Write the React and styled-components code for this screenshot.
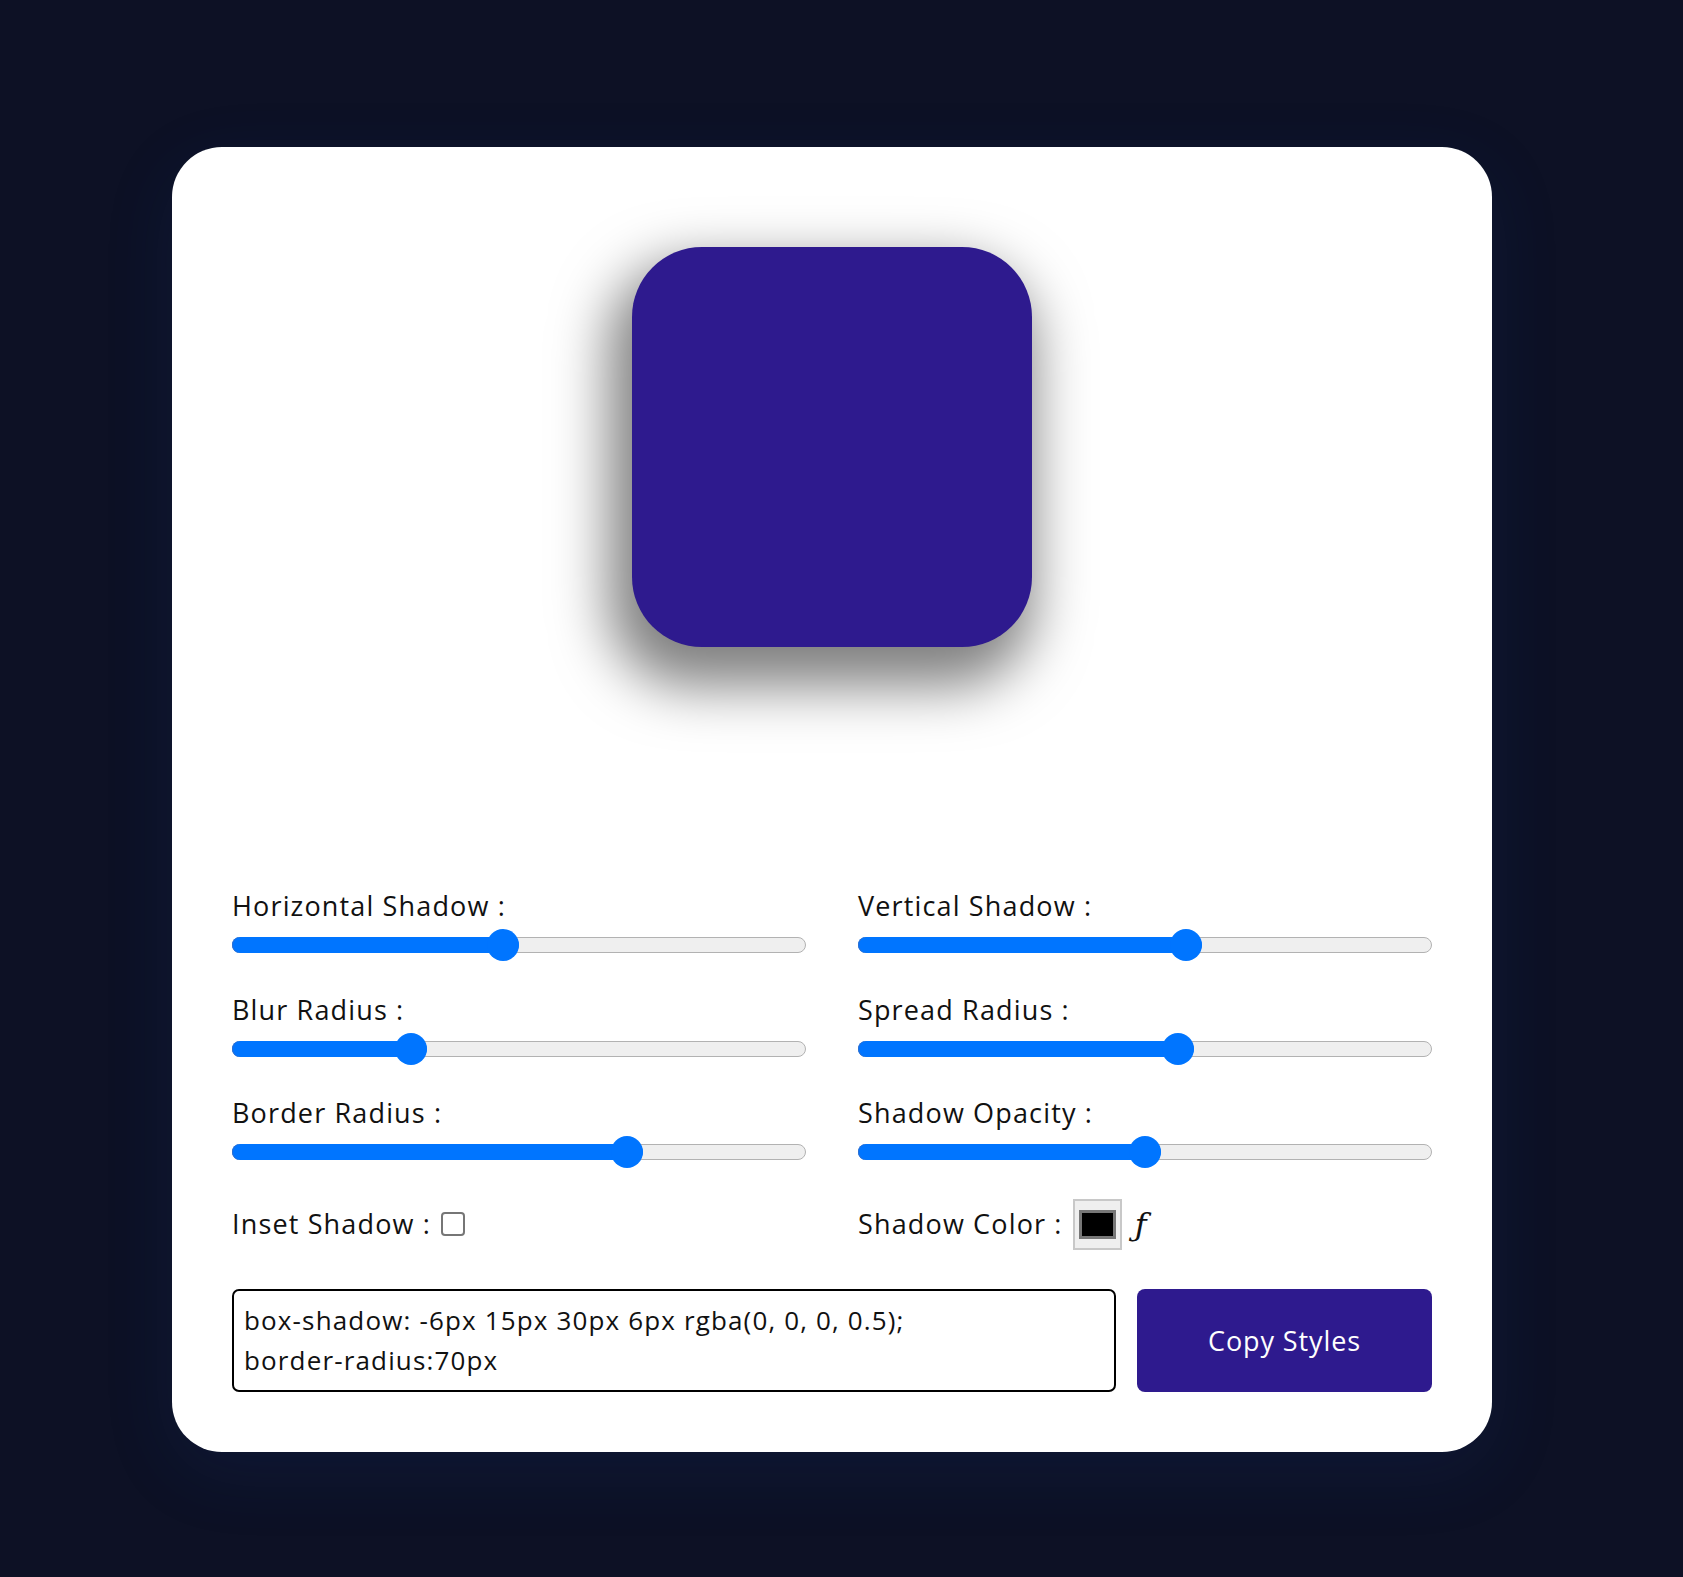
import React from 'react';
import styled, { createGlobalStyle } from 'styled-components';

const Global = createGlobalStyle`
  html, body { margin: 0; padding: 0; background: #0d1125; }
  body { font-family: "Open Sans", "Liberation Sans", sans-serif; color: #111; }
`;

const Page = styled.div`
  min-height: 1577px;
  box-sizing: border-box;
  padding: 147px 0 124px 172px;
`;

const Card = styled.main`
  width: 1320px;
  box-sizing: border-box;
  background: #fff;
  border-radius: 50px;
  padding: 0 60px 60px;
  box-shadow: 0 20px 70px rgba(20, 70, 160, 0.13);
`;

const Preview = styled.section`
  height: 600px;
  display: flex;
  align-items: center;
  justify-content: center;
`;

const Box = styled.div`
  width: 400px;
  height: 400px;
  background: #2e1a8e;
`;

const Controls = styled.div`
  margin-top: 141px;
  display: grid;
  grid-template-columns: 1fr 1fr;
  column-gap: 52px;
  row-gap: 30.5px;
`;

const Field = styled.div`
  display: flex;
  flex-direction: column;
`;

const Label = styled.label`
  font-size: 27px;
  line-height: 36px;
  letter-spacing: 1.15px;
  color: #111;
  white-space: nowrap;
`;

const SliderWrap = styled.div`
  margin-top: 5px;
  height: 32px;
  display: flex;
  align-items: center;
`;

const Track = styled.div`
  position: relative;
  flex: 1;
  height: 16px;
  box-sizing: border-box;
  border: 1px solid #b2b2b2;
  border-radius: 8px;
  background: #efefef;
`;

const Fill = styled.div`
  position: absolute;
  left: -1px;
  top: -1px;
  bottom: -1px;
  border-radius: 8px;
  background: #0075ff;
  box-shadow: inset 1px 0 0 #2f6fd0;
`;

const Thumb = styled.div`
  position: absolute;
  top: 50%;
  width: 32px;
  height: 32px;
  margin-top: -16px;
  border-radius: 50%;
  background: #0075ff;
`;

const InlineRow = styled.div`
  height: 51px;
  display: flex;
  align-items: center;
`;

const Check = styled.span`
  display: inline-block;
  width: 24px;
  height: 24px;
  box-sizing: border-box;
  margin-left: 10px;
  border: 2px solid #767676;
  border-radius: 4px;
  background: #fff;
`;

const ColorButton = styled.span`
  display: inline-flex;
  align-items: center;
  justify-content: center;
  margin-left: 10px;
  width: 49px;
  height: 51px;
  box-sizing: border-box;
  border: 2px solid #c8c8c8;
  background: #efefef;
`;

const Swatch = styled.span`
  width: 37px;
  height: 29px;
  box-sizing: border-box;
  border: 3px solid #777;
  background: ${p => p.$color};
`;

const Fn = styled.span`
  margin-left: 13px;
  font-family: "DejaVu Serif", "Liberation Serif", serif;
  font-style: italic;
  font-size: 32px;
  line-height: 1;
  color: #111;
  transform: translateY(1px);
`;

const Bottom = styled.div`
  margin-top: 39.5px;
  display: grid;
  grid-template-columns: 1fr 295px;
  column-gap: 21px;
  height: 103px;
`;

const Output = styled.textarea`
  box-sizing: border-box;
  height: 103px;
  margin: 0;
  padding: 9px 10px 0;
  border: 2px solid #000;
  border-radius: 7px;
  resize: none;
  outline: none;
  font-family: "Open Sans", "Liberation Sans", sans-serif;
  font-size: 26px;
  line-height: 40px;
  letter-spacing: 1.15px;
  color: #111;
  overflow: hidden;
`;

const CopyButton = styled.button`
  height: 103px;
  border: none;
  border-radius: 8px;
  background: #2e1a8e;
  color: #fff;
  font-family: "Open Sans", "Liberation Sans", sans-serif;
  font-size: 27px;
  letter-spacing: 0.9px;
  cursor: pointer;
`;

function Slider({ label, value, min, max }) {
  const frac = (value - min) / (max - min);
  return (
    <Field>
      <Label>{label} :</Label>
      <SliderWrap>
        <Track>
          <Fill style={{ width: `calc(${frac} * (100% - 30px) + 32px)` }} />
          <Thumb style={{ left: `calc(${frac} * (100% - 30px) - 1px)` }} />
        </Track>
      </SliderWrap>
    </Field>
  );
}

const PREVIEW_SCALE = 1.85;

export default function App() {
  const s = { h: -6, v: 15, blur: 30, spread: 6, radius: 70, opacity: 0.5 };
  const shadow = `${s.h}px ${s.v}px ${s.blur}px ${s.spread}px rgba(0, 0, 0, ${s.opacity})`;
  const k = PREVIEW_SCALE;
  const rendered = `${s.h * k}px ${s.v * k}px ${s.blur * k}px ${s.spread * k}px rgba(0, 0, 0, ${s.opacity})`;
  const css = `box-shadow: ${shadow};\nborder-radius:${s.radius}px`;
  return (
    <>
      <Global />
      <Page>
        <Card>
          <Preview>
            <Box style={{ boxShadow: rendered, borderRadius: `${s.radius}px` }} />
          </Preview>
          <Controls>
            <Slider label="Horizontal Shadow" value={s.h} min={-100} max={100} />
            <Slider label="Vertical Shadow" value={s.v} min={-100} max={100} />
            <Slider label="Blur Radius" value={s.blur} min={0} max={100} />
            <Slider label="Spread Radius" value={s.spread} min={-50} max={50} />
            <Slider label="Border Radius" value={s.radius} min={0} max={100} />
            <Slider label="Shadow Opacity" value={s.opacity} min={0} max={1} />
            <InlineRow>
              <Label>Inset Shadow :</Label>
              <Check role="checkbox" aria-checked="false" />
            </InlineRow>
            <InlineRow>
              <Label>Shadow Color :</Label>
              <ColorButton>
                <Swatch $color="#000" />
              </ColorButton>
              <Fn>ƒ</Fn>
            </InlineRow>
          </Controls>
          <Bottom>
            <Output readOnly value={css} />
            <CopyButton>Copy Styles</CopyButton>
          </Bottom>
        </Card>
      </Page>
    </>
  );
}
